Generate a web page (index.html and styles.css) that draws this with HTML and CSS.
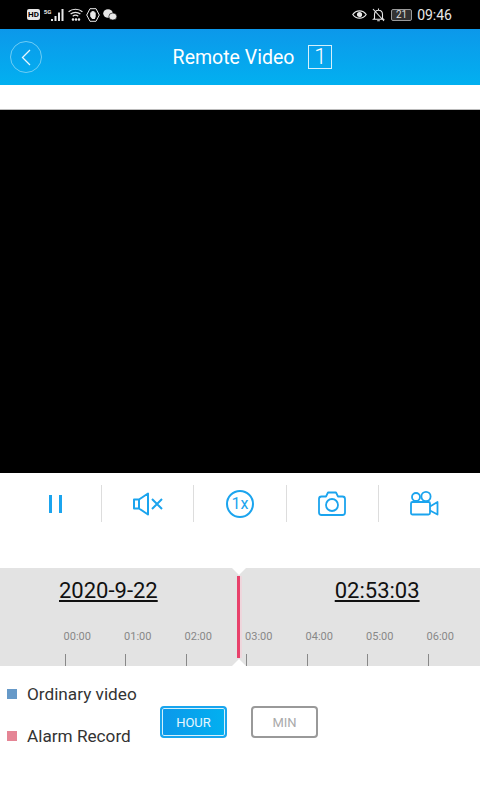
FILE: index.html
```html
<!DOCTYPE html>
<html lang="en">
<head>
  <meta charset="UTF-8">
  <meta name="viewport" content="width=device-width, initial-scale=1.0">
  <title>Remote Video</title>
  <link rel="stylesheet" href="styles.css">
</head>
<body>
  <div class="status-bar">
    <div class="status-left">
      <span class="hd">HD</span>
      <span class="net">5G</span>
      <svg class="signal" width="14" height="13" viewBox="0 0 14 13"><path d="M1 11v2M4.500 8v5M8 4.500V13M11.500 1v12" stroke="#e8e8e8" stroke-width="2"/></svg>
      <svg class="wifi" width="15" height="13" viewBox="0 0 15 13" fill="none" stroke="#e8e8e8" stroke-width="1.200"><path d="M.6 3.800C4.500.4 10.500.4 14.400 3.800M2.600 6C5.300 3.800 9.700 3.800 12.400 6M4.700 8.200c1.600-1.200 4-1.200 5.600 0"/><circle cx="5" cy="11.500" r=".7" fill="#e8e8e8"/><circle cx="8" cy="11.500" r=".7" fill="#e8e8e8"/><circle cx="11" cy="11.500" r=".7" fill="#e8e8e8"/></svg>
      <svg class="hand" width="14" height="14" viewBox="0 0 14 14"><path d="M4 .7h6L13.300 7 10 13.300H4L.7 7z" fill="none" stroke="#e8e8e8"/><path d="M4.200 7V4.500h1V3.500h1v-.5h1.500v.5h1v1h1v4.200L8.800 11H6.200L4.200 8.500z" fill="#e8e8e8"/></svg>
      <svg class="chat" width="14" height="12" viewBox="0 0 14 12"><ellipse cx="5" cy="4.500" rx="4.800" ry="4.200" fill="#e8e8e8"/><ellipse cx="9.800" cy="7.500" rx="4" ry="3.500" fill="#e8e8e8" stroke="#000" stroke-width=".6"/></svg>
    </div>
    <div class="status-right">
      <svg width="15" height="11" viewBox="0 0 15 11" fill="none" stroke="#e8e8e8" stroke-width="1.200"><path d="M.8 5.500C4 .6 11 .6 14.200 5.500 11 10.400 4 10.400.8 5.500z"/><circle cx="7.500" cy="5.500" r="2" fill="#e8e8e8"/></svg>
      <svg width="13" height="14" viewBox="0 0 13 14" fill="none" stroke="#e8e8e8" stroke-width="1.100"><path d="M2.500 10.500V6.500C2.500 4 4 2.300 6.500 2.300S10.500 4 10.500 6.500v4l1 .8h-10zM5.200 12.700h2.600M6.500 .6v1.700M1 1l11 12"/></svg>
      <span class="battery">21</span>
      <span class="clock">09:46</span>
    </div>
  </div>

  <header class="title-bar">
    <div class="back">
      <svg width="10" height="17" viewBox="0 0 10 17" fill="none" stroke="#e6f7fe" stroke-width="1.300"><path d="M9 1 1.500 8.500 9 16"/></svg>
    </div>
    <h1>Remote Video</h1>
    <span class="channel">1</span>
  </header>

  <div class="spacer"></div>
  <div class="video"></div>

  <div class="controls">
    <div class="control">
      <svg width="13" height="18" viewBox="0 0 13 18" fill="none" stroke="#1ba4ee" stroke-width="3"><path d="M1.500 0v18M11.500 0v18"/></svg>
    </div>
    <div class="control">
      <svg width="30" height="24" viewBox="0 0 30 24" fill="none" stroke="#1ba4ee" stroke-width="2" stroke-linejoin="round"><path d="M1 7.500h5v9H1zM6 7.500 15 1.500v21l-9-6"/><path d="M19 7l10 10M29 7l-10 10"/></svg>
    </div>
    <div class="control">
      <span class="speed">1x</span>
    </div>
    <div class="control">
      <svg width="28" height="25" viewBox="0 0 28 25" fill="none" stroke="#1ba4ee" stroke-width="1.800" stroke-linejoin="round"><path d="M3.500 5.500H8L10 1.500h8l2 4h4.500q2.500 0 2.500 2.500v13.500q0 2.500-2.500 2.500h-21Q1 24 1 21.500V8q0-2.500 2.500-2.500z"/><circle cx="14" cy="14" r="6"/></svg>
    </div>
    <div class="control">
      <svg width="29" height="25" viewBox="0 0 29 25" fill="none" stroke="#1ba4ee" stroke-width="1.800" stroke-linejoin="round"><circle cx="6" cy="6" r="4"/><circle cx="16" cy="5.500" r="4.600"/><rect x="1" y="11" width="19" height="12.500" rx="1.500"/><path d="M20 15.500 27.500 11v12.500L20 19.500"/></svg>
    </div>
  </div>

  <section class="timeline">
    <div class="timeline-head">
      <span class="date">2020-9-22</span>
      <span class="time">02:53:03</span>
    </div>
    <div class="scale">
      <div class="hour"><span>00:00</span><i></i></div>
      <div class="hour"><span>01:00</span><i></i></div>
      <div class="hour"><span>02:00</span><i></i></div>
      <div class="hour"><span>03:00</span><i></i></div>
      <div class="hour"><span>04:00</span><i></i></div>
      <div class="hour"><span>05:00</span><i></i></div>
      <div class="hour"><span>06:00</span><i></i></div>
    </div>
    <div class="cursor"></div>
    <div class="notch notch-top"></div>
    <div class="notch notch-bottom"></div>
  </section>

  <div class="bottom">
    <div class="legend">
      <div class="legend-item"><span class="swatch blue"></span>Ordinary video</div>
      <div class="legend-item"><span class="swatch pink"></span>Alarm Record</div>
    </div>
    <button class="zoom-btn active">HOUR</button>
    <button class="zoom-btn">MIN</button>
  </div>
</body>
</html>
```

FILE: styles.css
```css
body {
  font-family: Roboto, 'Liberation Sans', sans-serif;
  background-color: #fff;
  margin: 0;
  padding: 0;
  overflow: hidden;
}

.status-bar {
  height: 29px;
  background-color: #000;
  display: flex;
  justify-content: space-between;
  align-items: center;
  padding: 0 28px 0 27px;
}

.status-left,
.status-right {
  display: flex;
  align-items: center;
}

.status-left svg {
  margin-left: 3px;
}

.status-left .signal {
  margin-left: 0;
}

.hd {
  background-color: #e8e8e8;
  color: #000;
  font-size: 8px;
  font-weight: bold;
  line-height: 11px;
  padding: 0 1px;
  border-radius: 2px;
}

.net {
  color: #e8e8e8;
  font-size: 6px;
  font-weight: bold;
  margin: -6px 0 0 4px;
}

.status-right svg {
  margin-right: 5px;
}

.battery {
  width: 19px;
  height: 10px;
  border: 1px solid #999;
  border-radius: 2px;
  color: #ddd;
  font-size: 10px;
  line-height: 10px;
  text-align: center;
  margin: 0 5px 0 1px;
  background-color: #333;
}

.clock {
  color: #e8e8e8;
  font-size: 14px;
}

.title-bar {
  height: 56px;
  background: linear-gradient(#0c98ea, #02b0f0);
  display: flex;
  align-items: center;
  justify-content: center;
  position: relative;
  color: #fff;
  padding-left: 25px;
  box-sizing: border-box;
}

.title-bar h1 {
  font-size: 19.500px;
  font-weight: 400;
  margin: 0 14px 0 0;
}

.back {
  position: absolute;
  left: 10px;
  top: 12px;
  width: 30px;
  height: 30px;
  border: 1px solid #6fcdf4;
  border-radius: 50%;
  display: flex;
  align-items: center;
  justify-content: center;
}

.channel {
  width: 22px;
  height: 22px;
  border: 1px solid #d5f0fb;
  font-size: 22px;
  font-weight: 300;
  line-height: 22px;
  text-align: center;
}

.spacer {
  height: 24px;
  border-bottom: 1px solid #bbb;
}

.video {
  height: 363px;
  background-color: #000;
}

.controls {
  height: 95px;
  padding-top: 12px;
  box-sizing: border-box;
  display: flex;
  align-items: flex-start;
  padding-left: 10px;
  padding-right: 10px;
}

.control {
  flex: 1;
  height: 37px;
  display: flex;
  align-items: center;
  justify-content: center;
  border-left: 1px solid #ddd;
}

.control:first-child {
  border-left: none;
}

.speed {
  width: 24px;
  height: 24px;
  border: 2px solid #1ba4ee;
  border-radius: 50%;
  color: #1ba4ee;
  font-size: 16px;
  line-height: 24px;
  text-align: center;
}

.timeline {
  height: 98px;
  background-color: #e3e3e3;
  position: relative;
  overflow: hidden;
}

.timeline-head {
  display: flex;
  padding-top: 9px;
  height: 33px;
}

.date,
.time {
  font-size: 22px;
  line-height: 27px;
  color: #111;
  text-decoration: underline;
}

.date {
  margin-left: 59px;
}

.time {
  margin-left: 177px;
}

.scale {
  display: flex;
  margin: 20px 0 0 47px;
}

.hour {
  width: 60.500px;
  flex: none;
  text-align: center;
  font-size: 11px;
  line-height: 13px;
  color: #888;
}

.hour span {
  display: block;
  height: 24px;
}

.hour i {
  display: block;
  width: 1px;
  height: 12px;
  margin-left: 17.500px;
  background-color: #888;
}

.cursor {
  position: absolute;
  left: 237px;
  top: 8px;
  width: 3px;
  height: 82px;
  background-color: #e8416b;
  box-shadow: 2px 0 0 #eed6dc;
}

.notch {
  position: absolute;
  left: 232px;
  width: 0;
  height: 0;
  border-left: 7px solid transparent;
  border-right: 7px solid transparent;
}

.notch-top {
  top: 0;
  border-top: 7px solid #fff;
}

.notch-bottom {
  bottom: 0;
  border-bottom: 7px solid #fff;
}

.bottom {
  position: relative;
  display: flex;
  align-items: flex-start;
  padding: 40px 0 0 7px;
}

.legend {
  width: 153px;
  margin-top: -33px;
}

.legend-item {
  display: flex;
  align-items: center;
  height: 42px;
  font-size: 17.200px;
  color: #333;
}

.swatch {
  width: 10px;
  height: 10px;
  margin-right: 10px;
}

.swatch.blue {
  background-color: #6699c8;
}

.swatch.pink {
  background-color: #e58595;
}

.zoom-btn {
  width: 67px;
  height: 32px;
  box-sizing: border-box;
  border: 2px solid #999;
  border-radius: 4px;
  background-color: #fff;
  color: #aaa;
  font-family: inherit;
  font-size: 13px;
  padding: 0;
  margin-right: 24px;
}

.zoom-btn.active {
  background: linear-gradient(to right, #0c98ea, #02b0f0);
  color: #e8f7fe;
  border-color: #18a5ee;
  box-shadow: inset 0 0 0 1px #d5f0fb;
}
```
